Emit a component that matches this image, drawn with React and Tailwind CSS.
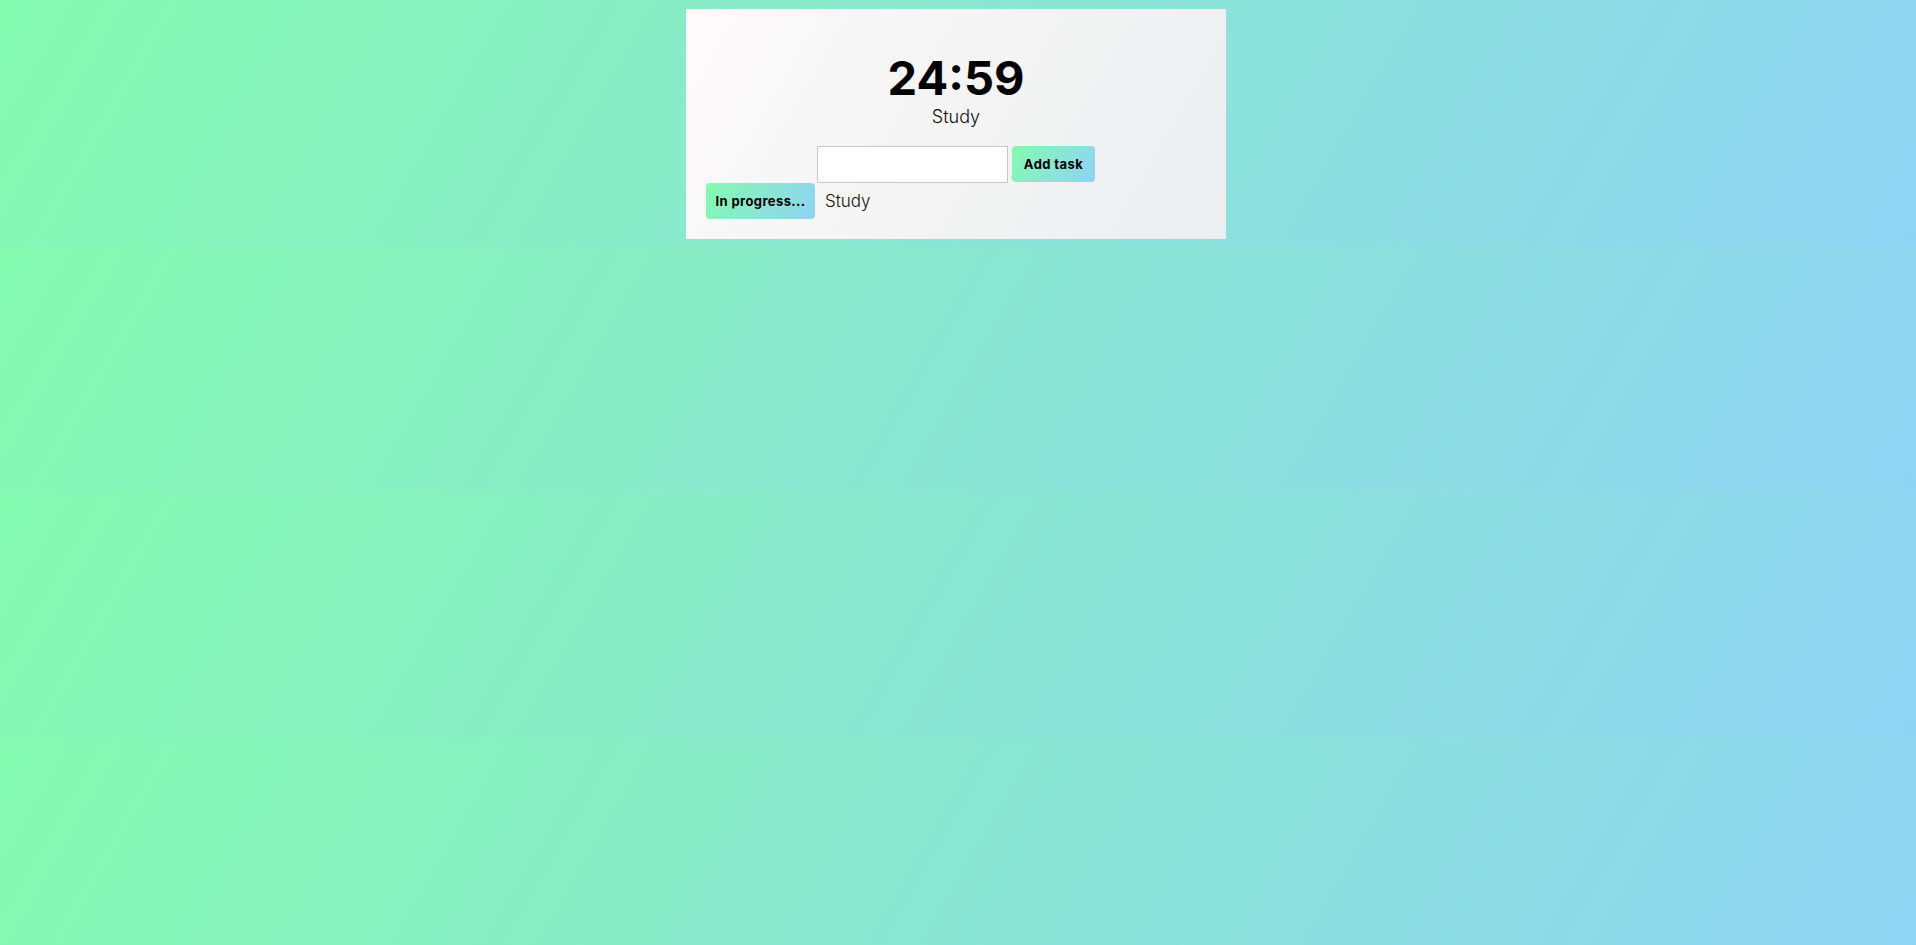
import React, { useState } from "react";

const App = () => {
  const [task, setTask] = useState("");

  return (
    <div className="min-h-screen w-full bg-[linear-gradient(120deg,#84fab0_0%,#8fd3f4_100%)] bg-[length:100%_246px] bg-repeat pt-[9px] pr-1 font-['Inter',sans-serif]">
      {/* Timer card */}
      <div className="mx-auto flex w-[540px] flex-col items-center bg-[linear-gradient(120deg,#fdfbfb_0%,#ebedee_100%)] px-5 pt-[41px] pb-5">
        <h1 className="text-[47px] leading-[56px] font-bold text-black">24:59</h1>
        <p className="text-[18px] leading-[22px] font-light text-[#111]">Study</p>

        <div className="mt-[18px] flex items-start gap-1">
          <input
            type="text"
            value={task}
            onChange={(e) => setTask(e.target.value)}
            className="h-[37px] w-[191px] border border-[#c8c8c8] bg-white px-2 text-sm outline-none"
          />
          <button className="h-[36px] w-[83px] rounded-[4px] bg-[linear-gradient(120deg,#84fab0_0%,#8fd3f4_100%)] pt-px text-[13px] font-bold tracking-[0.4px] text-black">
            Add task
          </button>
        </div>

        {/* Task list */}
        <div className="flex items-center gap-[10px] self-start">
          <button className="h-[36px] w-[109px] rounded-[4px] bg-[linear-gradient(120deg,#84fab0_0%,#8fd3f4_100%)] pt-px text-[13px] font-bold tracking-[0.4px] text-black">
            In progress...
          </button>
          <span className="pt-px text-[17px] font-light text-[#111]">Study</span>
        </div>
      </div>
    </div>
  );
};

export default App;
